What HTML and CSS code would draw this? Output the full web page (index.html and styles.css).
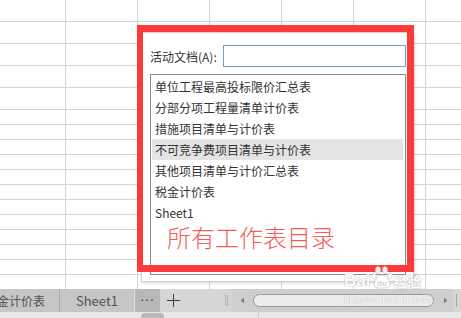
FILE: index.html
```html
<!DOCTYPE html>
<html lang="zh-CN">
<head>
<meta charset="utf-8">
<title>活动文档</title>
<link rel="stylesheet" href="styles.css">
</head>
<body>
<div class="screen">
  <div class="sheet">
    <div class="rows rows-tall"></div>
    <div class="rows rows-short"></div>
  </div>
  <div class="tabbar">
    <div class="tab tab-cut"><span class="tab-label-cut">税金计价表</span></div>
    <div class="tab tab-sheet">Sheet1</div>
    <div class="more">···</div>
    <div class="plus">
      <svg width="13" height="13" viewBox="0 0 13 13"><path d="M6.5 0v13M0 6.5h13" stroke="#3a3a3a" stroke-width="1" fill="none"/></svg>
    </div>
    <div class="grip"></div>
    <div class="hscroll">
      <span class="arrow">
        <svg width="5" height="7" viewBox="0 0 5 7"><path d="M4 0.5L1 3.5L4 6.5Z" fill="#777"/></svg>
      </span>
      <div class="thumb"></div>
      <span class="arrow">
        <svg width="5" height="7" viewBox="0 0 5 7"><path d="M1 0.5L4 3.5L1 6.5Z" fill="#777"/></svg>
      </span>
    </div>
    <div class="edge"></div>
  </div>
  <div class="strip">
    <div class="strip-knob"></div>
    <div class="strip-line"></div>
  </div>

  <div class="dialog">
    <div class="field">
      <label class="field-label">活动文档(A):</label>
      <div class="field-input"></div>
    </div>
    <ul class="list">
      <li>单位工程最高投标限价汇总表</li>
      <li>分部分项工程量清单计价表</li>
      <li>措施项目清单与计价表</li>
      <li class="selected">不可竞争费项目清单与计价表</li>
      <li>其他项目清单与计价汇总表</li>
      <li>税金计价表</li>
      <li>Sheet1</li>
    </ul>
  </div>

  <div class="redframe"></div>
  <div class="note">所有工作表目录</div>

  <div class="watermark">
    <div class="wm-top">
      <span class="wm-bai">Bai</span>
      <svg class="wm-paw" width="22" height="24" viewBox="0 0 22 24">
        <g fill="#fff" stroke="#c8c8c8" stroke-width="0.8">
          <ellipse cx="7" cy="5" rx="2.6" ry="3.4"/>
          <ellipse cx="14" cy="5" rx="2.6" ry="3.4"/>
          <ellipse cx="3" cy="11" rx="2.3" ry="3"/>
          <ellipse cx="19" cy="11" rx="2.3" ry="3"/>
          <path d="M11 10c4 0 8 6 8 10c0 3-4 3-8 3s-8 0-8-3c0-4 4-10 8-10z"/>
        </g>
        <text x="11" y="21" text-anchor="middle" font-size="8" font-family="Liberation Sans, sans-serif" font-weight="bold" fill="#d0d0d0">du</text>
      </svg>
      <span class="wm-jy">经验</span>
    </div>
    <div class="wm-url">jingyan.baidu.com</div>
  </div>
</div>
</body>
</html>
```
FILE: styles.css
```css
* { box-sizing: border-box; }
html, body { margin: 0; padding: 0; }
body {
  width: 461px;
  height: 318px;
  overflow: hidden;
  background: #fff;
  font-family: "Noto Sans CJK SC", "Microsoft YaHei", sans-serif;
}
.screen {
  position: relative;
  width: 461px;
  height: 318px;
  display: flex;
  flex-direction: column;
}
.sheet {
  height: 289px;
  display: flex;
  flex-direction: column;
  background-image: linear-gradient(to right, transparent 65px, #d4d4d4 65px, #d4d4d4 66px, transparent 66px);
  background-size: 72px 100%;
}
.rows { width: 100%; }
.rows-tall {
  height: 110px;
  background-image: linear-gradient(to bottom, transparent 21px, #d4d4d4 21px, #d4d4d4 22px, transparent 22px);
  background-size: 100% 22px;
}
.rows-short {
  height: 179px;
  background-image: linear-gradient(to bottom, transparent 14px, #d4d4d4 14px, #d4d4d4 15px, transparent 15px);
  background-size: 100% 15px;
}

.tabbar {
  height: 23px;
  display: flex;
  align-items: stretch;
  background: #d6d6d6;
  font-size: 13px;
  color: #505050;
}
.tab {
  background: #c6c6c6;
  display: flex;
  align-items: center;
  overflow: hidden;
  white-space: nowrap;
}
.tab-cut {
  width: 60px;
  border-right: 1px solid #a9a9a9;
}
.tab-label-cut {
  margin-left: -15px;
  font-size: 12px;
}
.tab-sheet {
  width: 75px;
  justify-content: center;
  border-right: 1px solid #e2e2e2;
}
.more {
  width: 25px;
  background: #b8b8b8;
  display: flex;
  align-items: center;
  justify-content: center;
  font-size: 12px;
  letter-spacing: 1px;
  color: #333;
  font-family: "DejaVu Sans", sans-serif;
}
.plus {
  width: 26px;
  display: flex;
  align-items: center;
  justify-content: center;
}
.grip {
  margin: 6px 0 6px 39px;
  border-left: 1px solid #b4b4b4;
  border-right: 1px solid #b4b4b4;
  width: 3px;
}
.hscroll {
  margin-left: 4px;
  width: 221px;
  background: #cecece;
  display: flex;
  align-items: center;
  padding: 0 4px 0 6px;
}
.arrow {
  width: 8px;
  display: flex;
  align-items: center;
  justify-content: center;
}
.thumb {
  flex: 1;
  height: 13px;
  margin: 0 7px 0 7px;
  border: 1px solid #9a9a9a;
  border-radius: 7px;
  background: #ececec;
}
.edge {
  width: 1px;
  margin: 5px 0 5px 3px;
  background: #a8a8a8;
}

.strip {
  height: 6px;
  background: #e8e8e8;
  display: flex;
  align-items: flex-start;
}
.strip-knob {
  width: 23px;
  height: 6px;
  margin: 1px 0 0 141px;
  background: #b9b9b9;
  border-radius: 4px 4px 0 0;
}
.strip-line {
  width: 1px;
  height: 6px;
  margin-left: 94px;
  background: #cfcfcf;
}

.dialog {
  position: absolute;
  left: 141px;
  top: 32px;
  width: 273px;
  height: 250px;
  background: #fff;
  border: 1px solid #d2d2d2;
  box-shadow: 1px 1px 3px rgba(0, 0, 0, 0.18);
  padding: 12px 7px 6px 8px;
  display: flex;
  flex-direction: column;
}
.field {
  display: flex;
  align-items: center;
  height: 22px;
}
.field-label {
  width: 73px;
  font-size: 12px;
  color: #333;
}
.field-input {
  flex: 1;
  height: 22px;
  border: 1px solid #6a9fd8;
  background: #fff;
}
.list {
  list-style: none;
  margin: 7px 0 0 0;
  padding: 1px 2px 0 1px;
  height: 201px;
  border: 1px solid #8c8c8c;
}
.list li {
  height: 21px;
  line-height: 21px;
  padding-left: 3px;
  font-size: 12px;
  color: #333;
  white-space: nowrap;
}
.list li.selected {
  background: #e4e4e4;
}

.redframe {
  position: absolute;
  left: 137px;
  top: 25px;
  width: 277px;
  height: 247px;
  border: 7px solid #fc3a3a;
  border-left-width: 6px;
}
.note {
  position: absolute;
  left: 167px;
  top: 223px;
  font-size: 24px;
  line-height: 28px;
  font-weight: 200;
  color: #f65c5c;
}

.watermark {
  position: absolute;
  left: 344px;
  top: 264px;
  color: #fff;
  opacity: 0.9;
}
.wm-top {
  display: flex;
  align-items: flex-end;
  height: 25px;
}
.wm-bai {
  font-family: "Liberation Sans", sans-serif;
  font-weight: bold;
  font-size: 17px;
  line-height: 17px;
  color: #fff;
  text-shadow: 0 0 1px #aaa, 0 0 1px #aaa;
}
.wm-paw { margin: 0 0 0 1px; }
.wm-jy {
  font-size: 14px;
  line-height: 16px;
  font-weight: bold;
  color: #fff;
  text-shadow: 0 0 1px #aaa, 0 0 1px #aaa;
}
.wm-url {
  margin-top: 4px;
  font-family: "Liberation Sans", sans-serif;
  font-size: 11px;
  line-height: 12px;
  color: #fff;
  text-shadow: 0 0 1px #999;
}
```
